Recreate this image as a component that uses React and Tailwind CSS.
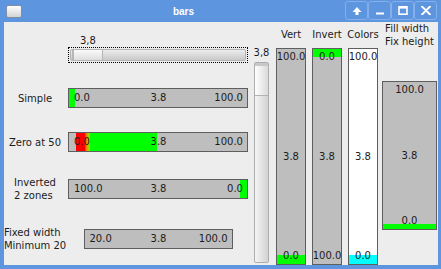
import React from "react";

const FONT = "font-['DejaVu_Sans',sans-serif]";

// ── Horizontal bar ─────────────────────────────────────
function HBar({ width, left, mid, right, fills = [] }) {
  return (
    <div className={`relative h-[20px] border border-[#5e5e5e] bg-[#bebebe] ${width}`}>
      {fills}
      <div className="relative grid grid-cols-3 h-full items-center pl-[5px] pr-[4px] text-[10px] leading-[12px] text-[#1c1c1c]">
        <span className="text-left">{left}</span>
        <span className="text-center">{mid}</span>
        <span className="text-right">{right}</span>
      </div>
    </div>
  );
}

// ── Vertical bar ───────────────────────────────────────
function VBar({ className, bg = "bg-[#bebebe]", top, mid, bottom, fill }) {
  return (
    <div className={`relative border border-[#5e5e5e] ${bg} ${className}`}>
      {fill}
      <div className="relative flex flex-col justify-between items-center h-full pt-[2px] pb-[2px] text-[10px] leading-[12px] text-[#1c1c1c]">
        <span>{top}</span>
        <span>{mid}</span>
        <span>{bottom}</span>
      </div>
    </div>
  );
}

function Row({ label, mt, children, labelClass = "" }) {
  return (
    <div className={`flex items-center h-[20px] ${mt}`}>
      <div className={`w-[62px] flex justify-center ${labelClass}`}>
        <div className="text-left text-[10px] leading-[13px] text-[#1c1c1c] whitespace-nowrap">{label}</div>
      </div>
      <div className="w-[184px] flex justify-center">{children}</div>
    </div>
  );
}

function TitleBar() {
  return (
    <div className="h-[22px] flex items-center">
      <div className="ml-[6px] w-[16px] h-[13px] rounded-[2px] border border-[#7d8ea6] bg-gradient-to-b from-white to-[#d4d4d4]" />
      <div className="flex-1 text-center text-white font-bold text-[10px] font-['Liberation_Sans',sans-serif]">bars</div>
      <div className="flex mr-[4px] self-start mt-[1px]">
        {[
          <path key="u" d="M5 1 L9.5 6 H6.5 V9 H3.5 V6 H0.5 Z" fill="white" />,
          <rect key="m" x="1" y="6.5" width="8" height="2" fill="white" />,
          <g key="x" fill="none" stroke="white" strokeWidth="1.6"><rect x="1" y="0.8" width="8" height="7.4" /><line x1="1" y1="1.4" x2="9" y2="1.4" strokeWidth="2.4" /></g>,
          <path key="c" d="M1 0.5 L9 8.5 M9 0.5 L1 8.5" stroke="white" strokeWidth="2" strokeLinecap="round" />,
        ].map((icon, i) => (
          <div
            key={i}
            className="w-[23px] h-[19px] border border-[#83b0ea] rounded-[3px] flex items-center justify-center"
          >
            <svg width="10" height="9" viewBox="0 0 10 9">{icon}</svg>
          </div>
        ))}
      </div>
    </div>
  );
}

export default function App() {
  return (
    <div className={`w-[441px] h-[269px] bg-[#5d95de] flex flex-col ${FONT}`}>
      <TitleBar />
      <div className="flex-1 ml-[4px] mr-[3px] mb-[4px] bg-[#ededed] flex items-start">
        {/* left column */}
        <div className="w-[246px] flex flex-col">
          <div className="mt-[13px] h-[12px] ml-[76px] text-[10px] leading-[12px] text-[#1c1c1c]">3,8</div>
          <div className="ml-[64px] w-[180px] h-[16px] border border-dotted border-black p-px">
            <div className="h-full rounded-[2px] border border-[#b4b4b4] bg-gradient-to-b from-[#ececec] to-[#c9c9c9] flex">
              <div className="ml-px w-[31px] h-full border-l-2 border-r border-[#b6b6b6] bg-gradient-to-b from-[#fafafa] to-[#dedede]" />
            </div>
          </div>

          <Row label="Simple" mt="mt-[25px]">
            <HBar
              width="w-[180px]"
              left="0.0" mid="3.8" right="100.0"
              fills={<div className="absolute left-0 top-0 bottom-0 w-[6px] bg-[#00ff00]" />}
            />
          </Row>

          <Row label="Zero at 50" mt="mt-[24px]">
            <HBar
              width="w-[180px]"
              left="0.0" mid="3.8" right="100.0"
              fills={
                <div className="absolute left-[7px] top-0 bottom-0 w-[81px] flex">
                  <div className="w-[9px] bg-[#ff0000]" />
                  <div className="w-[5px] bg-gradient-to-r from-[#ff0000] to-[#00ff00]" />
                  <div className="flex-1 bg-[#00ff00]" />
                </div>
              }
            />
          </Row>

          <Row label={<>Inverted<br />2 zones</>} mt="mt-[27px]">
            <HBar
              width="w-[180px]"
              left="100.0" mid="3.8" right="0.0"
              fills={<div className="absolute right-0 top-0 bottom-0 w-[7px] bg-[#00ff00]" />}
            />
          </Row>

          <Row label={<>Fixed width<br />Minimum 20</>} mt="mt-[30px]">
            <HBar width="w-[149px]" left="20.0" mid="3.8" right="100.0" />
          </Row>
        </div>

        {/* vertical slider */}
        <div className="ml-[4px] w-[15px] flex flex-col items-center">
          <div className="mt-[25px] h-[12px] text-[10px] leading-[12px] text-[#1c1c1c]">3,8</div>
          <div className="mt-[3px] w-[15px] h-[201px] rounded-[2px] border border-[#adadad] bg-gradient-to-r from-[#f4f4f4] to-[#d2d2d2] flex flex-col">
            <div className="h-[3px] bg-[#c8c8c8]" />
            <div className="h-[30px] border-b border-[#b2b2b2] bg-gradient-to-r from-[#ffffff] to-[#dadada]" />
          </div>
        </div>

        {/* Vert */}
        <div className="ml-[7px] w-[30px] h-full flex flex-col">
          <div className="h-[26px] flex items-center justify-center text-[10px] leading-[12px] text-[#1c1c1c]">Vert</div>
          <VBar
            className="flex-1"
            top="100.0" mid="3.8" bottom="0.0"
            fill={<div className="absolute left-0 right-0 bottom-0 h-[9px] bg-[#00ff00]" />}
          />
        </div>

        {/* Invert */}
        <div className="ml-[6px] w-[30px] h-full flex flex-col">
          <div className="h-[26px] flex items-center justify-center text-[10px] leading-[12px] text-[#1c1c1c]">Invert</div>
          <VBar
            className="flex-1"
            top="0.0" mid="3.8" bottom="100.0"
            fill={<div className="absolute left-0 right-0 top-0 h-[8px] bg-[#00ff00]" />}
          />
        </div>

        {/* Colors */}
        <div className="ml-[6px] w-[30px] h-full flex flex-col">
          <div className="h-[26px] flex items-center justify-center text-[10px] leading-[12px] text-[#1c1c1c]">Colors</div>
          <VBar
            className="flex-1"
            bg="bg-white"
            top="100.0" mid="3.8" bottom="0.0"
            fill={<div className="absolute left-0 right-0 bottom-0 h-[9px] bg-[#00ffff]" />}
          />
        </div>

        {/* Fill width / Fix height */}
        <div className="ml-[4px] w-[55px] h-full flex flex-col">
          <div className="h-[26px] flex justify-center">
            <div className="text-left text-[10px] leading-[13px] text-[#1c1c1c] whitespace-nowrap">Fill width<br />Fix height</div>
          </div>
          <VBar
            className="mt-[33px] h-[149px]"
            top="100.0" mid="3.8" bottom="0.0"
            fill={<div className="absolute left-0 right-0 bottom-0 h-[5px] bg-[#00ff00]" />}
          />
        </div>
      </div>
    </div>
  );
}
